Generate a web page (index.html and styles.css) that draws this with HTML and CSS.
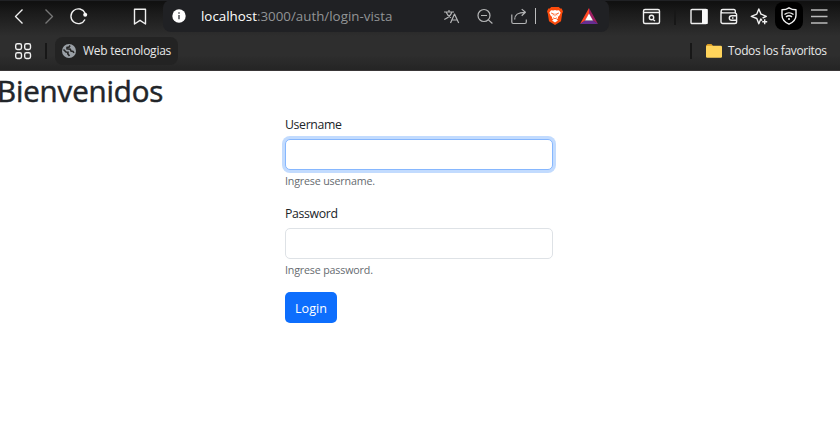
FILE: index.html
```html
<!DOCTYPE html>
<html lang="es">
<head>
<meta charset="utf-8">
<title>Login</title>
<link rel="stylesheet" href="styles.css">
</head>
<body>
<header class="chrome">
  <div class="toolbar">
    <div class="nav">
      <svg class="icon" viewBox="0 0 20 20"><path d="M13.500 2.500 6.500 9.500 13.500 16.500"/></svg>
      <svg class="icon dim" viewBox="0 0 20 20"><path d="M6.500 2.500 13.500 9.500 6.500 16.500"/></svg>
      <svg class="icon" viewBox="0 0 20 20"><path d="M16 12.500A7.400 7.400 0 1 1 16 6"/><circle class="fill" cx="16.200" cy="7.800" r="2"/></svg>
    </div>
    <svg class="icon bookmark" viewBox="0 0 20 20"><path d="M4.500 2.200h11v14.800L10 13.300l-5.500 3.700z"/></svg>
    <div class="address">
      <svg class="info" viewBox="0 0 14 14"><circle cx="7" cy="7" r="6.700" fill="#fff"/><path d="M7 6v4.300M7 3.300v1.500" stroke="#55575b" stroke-width="1.600"/></svg>
      <span class="url"><b>localhost</b>:3000/auth/login-vista</span>
      <div class="actions">
        <svg class="icon" viewBox="0 0 20 20"><path d="M3 5h10M8 3v2M10.800 5.200C9.700 8.500 7 10.800 3.300 12.500M5.200 5.200c1 2.500 2.500 4.300 4.800 5.500M9.500 16l4-9 4.200 9M10.900 13h5.300"/></svg>
        <svg class="icon" viewBox="0 0 20 20"><circle cx="9" cy="8.500" r="6"/><path d="M6 8.500h6M13.400 12.900l4 3.600"/></svg>
        <svg class="icon" viewBox="0 0 20 20"><path d="M2.800 7.500v7.500a1.500 1.500 0 0 0 1.500 1.500h11.500a1.500 1.500 0 0 0 1.500-1.500V12.500M5.700 12.500c0-5 3-7.200 10.500-7.200M12.700 2.100 16.400 5.300 12.700 8.700"/></svg>
      </div>
      <i class="split"></i>
      <svg class="brave" viewBox="0 0 16 18"><path fill="#fb4b0c" d="M4.200 0h7.600l1.500 1.600h1.400L16 4.500l-.8 2L14 14.200 8 18l-6-3.800L.8 6.500 0 4.500l1.300-2.900h1.400z"/><path fill="#fff" d="M4 3.200 6.400 3.500 8 3l1.600.5 2.400-.3 1.700 2.500-1.400 3-1.500 1.200.4 1.600-1.900.5 1.600 1.500L8 15.600l-2.900-2.100L6.700 12l-1.900-.5.4-1.600-1.500-1.200-1.400-3z"/><path fill="none" stroke="#fb4b0c" stroke-width=".8" d="M4 6l2.500.8L6 8.400M12 6l-2.500.8.5 1.600M8 6.500v2.800M6 10.800l2 .9 2-.9"/></svg>
      <svg class="bat" viewBox="0 0 18 16"><path fill="#ff4724" d="M9 0 0 16l5-3.200L9 6z"/><path fill="#9e1f63" d="m9 0 9 16-5-3.200L9 6z"/><path fill="#662d91" d="M0 16h18l-5-3.500H5z"/><path fill="#fff" d="m9 5.500 4 7H5z"/></svg>
    </div>
    <svg class="icon find" viewBox="0 0 20 20"><rect x="2.500" y="2.500" width="16" height="14" rx="1.500"/><path d="M3 5.500h15M12 12.500l2 1.500"/><circle cx="10.500" cy="10.500" r="2.200"/></svg>
    <i class="divider small"></i>
    <div class="tools">
      <svg class="icon" viewBox="0 0 20 20"><rect x="2" y="2.500" width="16" height="14" rx="1"/><path class="fill" d="M13 2h5.500v15H13z"/></svg>
      <svg class="icon" viewBox="0 0 20 20"><path d="M16.300 5.800V4a1.400 1.400 0 0 0-1.400-1.500H3.800a1.700 1.700 0 0 0 0 3.400h12a1.800 1.800 0 0 1 1.800 1.800v7a1.800 1.800 0 0 1-1.800 1.800h-12A1.800 1.800 0 0 1 2 14.700V4.400M17.600 8.700h-5a2.300 2.300 0 0 0 0 4.600h5M13 11h1.500"/></svg>
      <svg class="icon" viewBox="0 0 20 20"><path d="M13 13.700 11.800 12 9.800 16.800 7.800 11.500 2.300 9.300l5.500-2.200L9.800 2l2.200 5.100L17.300 9.300l-3.700 1.700M15.700 12.300v5M13.200 14.800h5"/></svg>
    </div>
    <div class="shield"><svg class="icon" viewBox="0 0 20 20"><path d="M10 1.800c2.200 1.500 4.400 2 7 2v5.500c0 4-2.800 7-7 8.900-4.200-1.900-7-4.900-7-8.900V3.800c2.600 0 4.800-.5 7-2z"/><path d="M5.500 8.500a7 7 0 0 1 9 0M7 10.900a4.700 4.700 0 0 1 6 0"/><circle class="fill" cx="10" cy="13" r="1"/></svg></div>
    <svg class="icon menu" viewBox="0 0 20 20"><path d="M2 3h16.500M2 9.500h16.500M2 16h16.500"/></svg>
  </div>
  <div class="bookmarks">
    <svg class="apps" viewBox="0 0 18 18"><rect x="1.700" y="1.700" width="5.800" height="5.800" rx="1.700"/><rect x="10.700" y="1.700" width="5.800" height="5.800" rx="1.700"/><rect x="1.700" y="10.700" width="5.800" height="5.800" rx="1.700"/><rect x="10.700" y="10.700" width="5.800" height="5.800" rx="1.700"/></svg>
    <i class="divider"></i>
    <div class="chip">
      <svg class="globe" viewBox="0 0 14 14"><circle cx="7" cy="7" r="7" fill="#9aa0a6"/><path d="M1.500 5.500 4 8l2 .2-.2 1.500L7.500 12M8 1.500 7.200 3 5 3.400v1.500l3.300.4.7 1.800 2 .3 1 1.500" fill="none" stroke="#262626" stroke-width="1.600"/></svg>
      <span class="tech">Web tecnologias</span>
    </div>
    <i class="divider last"></i>
    <svg class="folder" viewBox="0 0 16 14"><path fill="#d99b24" d="M1.500 0h4l1.500 2H15v4H0V1.500z"/><rect y="1.700" width="16" height="12" rx="1.200" fill="#ffd45b"/></svg>
    <span class="all">Todos los favoritos</span>
  </div>
</header>
<main>
  <h1><span>Bienvenidos</span></h1>
  <form class="form">
    <label for="user">Username</label>
    <input class="focused" id="user" type="text">
    <small>Ingrese username.</small>
    <label for="pass">Password</label>
    <input id="pass" type="password">
    <small>Ingrese password.</small>
    <button type="button">Login</button>
  </form>
</main>
</body>
</html>
```

FILE: styles.css
```css
* { box-sizing: border-box; }
body {
  margin: 0;
  height: 447px;
  overflow: hidden;
  background: #fff;
  color: #212529;
  font-family: "Open Sans", "Noto Sans", sans-serif;
}
svg { display: block; flex: none; }
i { display: block; flex: none; }
.chrome {
  height: 71px;
  background: linear-gradient(#111 0, #111 2px, #1b1b1b 12px, #2e2e2e 35px, #2e2e2e 54px, #242424 70px);
  border-top: 1px solid #202124;
  border-bottom: 1px solid #393637;
}
.toolbar { display: flex; align-items: center; height: 32px; margin-top: -1px; padding: 1px 11px 0 9px; }
.icon { width: 20px; height: 20px; fill: none; stroke: #f0f0f0; stroke-width: 1.4; stroke-linejoin: round; }
.icon .fill { fill: #f8f8f8; stroke: none; }
.dim { stroke: #777; }
.nav { display: flex; gap: 10px; }
.bookmark { margin-left: 41px; }
.address {
  display: flex;
  align-items: center;
  width: 446px;
  height: 32px;
  margin: -1px 0 0 13px;
  padding: 1px 11px 0 9px;
  border-radius: 8px;
  background: #202124;
}
.info { width: 14px; height: 14px; margin-top: -1px; }
.url { margin: -1px 0 0 15px; width: 240px; color: #929496; font-size: 13.35px; line-height: 20px; white-space: nowrap; }
.url b { color: #fff; font-weight: 400; }
.actions { display: flex; gap: 14px; }
.actions .icon { stroke: #b4b5b6; stroke-width: 1.2; }
.split { width: 1px; height: 16px; margin: -1px 0 0 6px; background: #bcbdbe; }
.brave { width: 16px; height: 18px; margin: -1px 0 0 11px; }
.bat { width: 18px; height: 16px; margin: -1px 0 0 17px; }
.find { margin-left: 32px; }
.divider { width: 2px; height: 16px; background: #171717; }
.divider.small { margin-left: 13px; }
.tools { display: flex; gap: 10px; margin-left: 13px; }
.shield { display: flex; align-items: center; justify-content: center; width: 28px; height: 28px; margin: -1px 0 0 6px; border-radius: 8px; background: #000; }
.menu { margin-left: 6px; stroke: #bbb; }
.bookmarks { display: flex; align-items: center; height: 38px; padding: 0 13px 0 14px; color: #e8e8e8; font-size: 12px; line-height: 20px; white-space: nowrap; }
.apps { width: 18px; height: 18px; fill: none; stroke: #f0f0f0; stroke-width: 1.4; }
.apps + .divider { margin-left: 13px; }
.chip { display: flex; align-items: center; width: 123px; height: 28px; margin-left: 8px; padding-left: 7px; border-radius: 8px; background: #232323; }
.globe { width: 14px; height: 14px; }
.tech { margin-left: 7px; letter-spacing: -0.25px; }
.divider.last { margin-left: auto; }
.folder { width: 16px; height: 14px; margin-left: 14px; }
.all { width: 99px; margin-left: 6px; letter-spacing: -0.35px; }
h1 { margin: 0; height: 40px; font-size: 29.5px; font-weight: 500; line-height: 39px; letter-spacing: -0.15px; -webkit-text-stroke: 0.5px #212529; }
h1 span { display: block; margin-left: -3px; }
.form { display: flex; flex-direction: column; width: 268px; margin: 4px 0 0 285px; }
label { height: 20px; font-size: 12.3px; line-height: 20px; letter-spacing: -0.35px; }
input { height: 31px; margin: 4px 0 0; padding: 0 10px; border: 1px solid #dee2e6; border-radius: 5px; background: #fff; outline: 0; }
.focused { border-color: #86b7fe; box-shadow: 0 0 0 3px #c2dbfe; }
small { height: 16px; margin: 3px 0 15px; color: #666b70; font-size: 10.7px; line-height: 16px; letter-spacing: -0.17px; }
button { width: 52px; height: 31px; margin-top: -1px; padding: 1px 0 0; border: 0; border-radius: 5px; background: #0d6efd; color: #fff; font: 12.6px "Open Sans", "Noto Sans", sans-serif; }
```
